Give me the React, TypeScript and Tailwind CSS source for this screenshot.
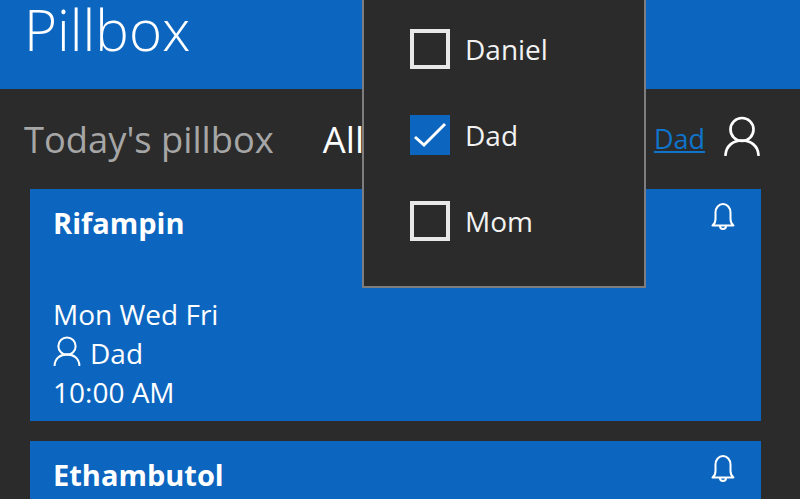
const font = "[font-family:'Open_Sans','Noto_Sans',sans-serif]";

function Person({ className }: { className: string }) {
  return (
    <svg viewBox="0 0 36 40" fill="none" stroke="currentColor" strokeWidth="2.700" strokeLinecap="round" className={className}>
      <circle cx="18" cy="13.500" r="11.500" />
      <path d="M1.500 39C2 30 9 24.500 18 24.500S34 30 34.500 39" />
    </svg>
  );
}

function Bell() {
  return (
    <svg viewBox="0 0 24 28" fill="none" stroke="currentColor" strokeWidth="2" strokeLinejoin="round" className="w-6 h-7 text-white">
      <path d="M1.500 23.500c2-1.500 3-3 3-6.500V10.500a7.500 8.500 0 0 1 15 0V17c0 3.500 1 5 3 6.500z" />
      <path d="M9 24a3 3 0 0 0 6 0" />
    </svg>
  );
}

function Check({ label, on }: { label: string; on?: boolean }) {
  return (
    <div className="flex items-center h-[86px]">
      {on ? (
        <div className="w-10 h-10 bg-[#0c66c0] flex items-center justify-center">
          <svg viewBox="0 0 40 40" fill="none" stroke="white" strokeWidth="3" className="w-10 h-10">
            <path d="M5 22l9 8L35 9" />
          </svg>
        </div>
      ) : (
        <div className="w-10 h-10 border-[4px] border-[#e8e8e8]" />
      )}
      <span className="ml-[15px] text-[28px] text-[#f2f2f2]">{label}</span>
    </div>
  );
}

export default function App() {
  return (
    <div className={`relative w-[800px] h-[499px] overflow-hidden bg-[#2b2b2b] ${font}`}>
      <header className="h-[89px] bg-[#0c66c0] pl-6 flex items-start">
        <h1 className="text-[56.500px] leading-[60px] font-light text-white">Pillbox</h1>
      </header>

      <div className="h-[100px] pl-6 pr-10 flex items-center">
        <span className="text-[36.300px] text-[#a6a6a6]">Today's pillbox</span>
        <span className="ml-[49px] text-[36.300px] text-white">All</span>
        <a className="ml-auto text-[27px] text-[#0f74cc] underline">Dad</a>
        <Person className="ml-[19px] mb-[6px] w-9 h-10 text-white" />
      </div>

      <div className="pl-[30px] pr-[39px] flex flex-col gap-5">
        <article className="relative h-[232px] bg-[#0c66c0] text-white pl-[23px] pr-6 pt-[12px]">
          <h2 className="text-[29px] leading-[44px] font-bold">Rifampin</h2>
          <div className="mt-[50px] text-[28px] leading-[39px]">
            <div>Mon Wed Fri</div>
            <div className="flex items-center gap-[9px]">
              <Person className="w-7 h-[30px] mb-[5px] text-white" />
              <span>Dad</span>
            </div>
            <div>10:00 AM</div>
          </div>
          <div className="absolute right-[26px] top-[13px]"><Bell /></div>
        </article>
        <article className="relative h-[232px] bg-[#0c66c0] text-white pl-[23px] pr-6 pt-[12px]">
          <h2 className="text-[29px] leading-[44px] font-bold">Ethambutol</h2>
          <div className="absolute right-[26px] top-[13px]"><Bell /></div>
        </article>
      </div>

      <div className="absolute left-[362px] top-0 w-[284px] h-[288px] bg-[#2b2b2b] border-r-2 border-b-2 border-l-2 border-[#7d7d7d] pl-[46px] pt-[6px]">
        <Check label="Daniel" />
        <Check label="Dad" on />
        <Check label="Mom" />
      </div>
    </div>
  );
}
